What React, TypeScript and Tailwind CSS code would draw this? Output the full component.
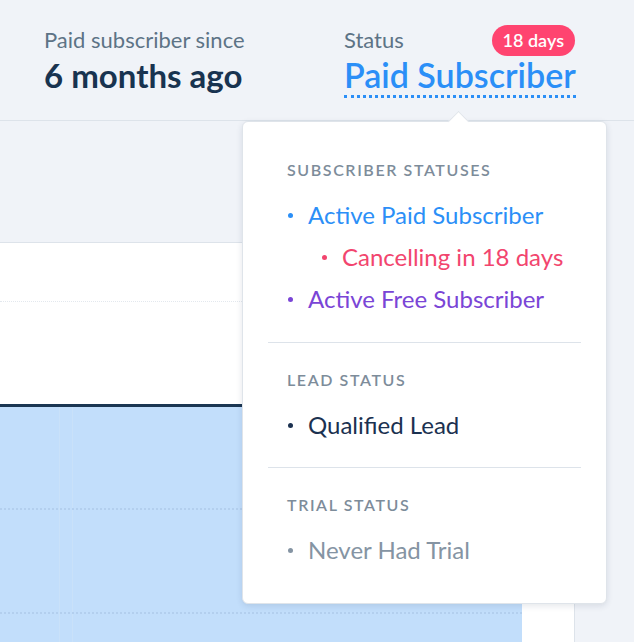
import React from "react";

const font = { fontFamily: "Lato, 'Open Sans', sans-serif" };

function Bullet({ color, indent, textClass, children }: { color: string; indent?: boolean; textClass: string; children: React.ReactNode }) {
  return (
    <div className={`flex items-center h-[42px] ${indent ? "pl-[34px]" : "pl-0"}`}>
      <span className={`w-[5px] h-[5px] rounded-full ${color}`} />
      <span className={`ml-[15px] text-[24px] whitespace-nowrap ${textClass}`}>{children}</span>
    </div>
  );
}

export default function App() {
  return (
    <div className="relative w-[634px] h-[642px] bg-[#f0f3f8] overflow-hidden" style={font}>
      {/* Header */}
      <div className="h-[121px] border-b border-[#dde3ea] flex pl-[44px] pt-[26px]">
        <div className="w-[300px]">
          <div className="text-[22px] leading-[28px] text-[#5d7386] whitespace-nowrap">Paid subscriber since</div>
          <div className="text-[33px] leading-[42px] font-bold text-[#183350] whitespace-nowrap">6 months ago</div>
        </div>
        <div className="w-[231px] relative">
          <div className="text-[22px] leading-[28px] text-[#5d7386]">Status</div>
          <div className="inline-block whitespace-nowrap text-[34px] leading-[41px] font-semibold text-[#2b8ff7] border-b-[3px] border-dotted border-[#2b8ff7]">
            Paid Subscriber
          </div>
          <span className="absolute right-0 top-[-1px] h-[31px] px-[11px] rounded-full bg-[#ff4470] text-white text-[18px] font-semibold flex items-center whitespace-nowrap">
            18 days
          </span>
        </div>
      </div>
      {/* middle band */}
      <div className="h-[121px]" />
      {/* chart panel */}
      <div className="w-[575px] h-[400px] bg-white border-t border-r border-[#dde3ea] flex flex-col">
        <div className="h-[58px]" />
        <div className="h-0 border-t border-dotted border-[#e3e8ee]" />
        <div className="h-[102px]" />
        <div className="relative w-[522px] flex-1 bg-[#c2defb] border-t-[3px] border-[#1b3652]">
          <div className="absolute left-[59px] top-0 bottom-0 w-px bg-[#c9e1f9]" />
          <div className="absolute left-[72px] top-0 bottom-0 w-px bg-[#c9e1f9]" />
          <div className="absolute left-0 right-0 top-[101px] border-t-2 border-dotted border-[#b3cfee]" />
          <div className="absolute left-0 right-0 top-[205px] border-t-2 border-dotted border-[#b3cfee]" />
        </div>
      </div>

      {/* Popover */}
      <div className="absolute left-[242px] top-[121px] w-[365px] h-[483px] bg-white rounded-[6px] border border-[#dfe4ea] shadow-[0_2px_6px_rgba(30,50,80,0.12)]">
        <div className="absolute left-[208px] top-[-8px] w-[15px] h-[15px] bg-white border-l border-t border-[#dfe4ea] rotate-45" />
        <div className="relative px-[25px]">
          <div className="pl-[20px] pt-[38px] pb-[22px]">
            <div className="-ml-[1px] text-[16px] leading-[20px] font-semibold tracking-[1.6px] text-[#7d8c9a] mb-[14px]">SUBSCRIBER STATUSES</div>
            <Bullet color="bg-[#2b8ff7]" textClass="text-[#2b8ff7]">Active Paid Subscriber</Bullet>
            <Bullet color="bg-[#f2456e]" indent textClass="text-[#f2456e]">Cancelling in 18 days</Bullet>
            <Bullet color="bg-[#7a45d6]" textClass="text-[#7a45d6]">Active Free Subscriber</Bullet>
          </div>
          <div className="border-t border-[#dde3ea]" />
          <div className="pl-[20px] pt-[27px] pb-[21px]">
            <div className="-ml-[1px] text-[16px] leading-[20px] font-semibold tracking-[1.6px] text-[#7d8c9a] mb-[14px]">LEAD STATUS</div>
            <Bullet color="bg-[#1b3150]" textClass="text-[#1b3150]">Qualified Lead</Bullet>
          </div>
          <div className="border-t border-[#dde3ea]" />
          <div className="pl-[20px] pt-[27px]">
            <div className="-ml-[1px] text-[16px] leading-[20px] font-semibold tracking-[1.6px] text-[#7d8c9a] mb-[14px]">TRIAL STATUS</div>
            <Bullet color="bg-[#8594a3]" textClass="text-[#8594a3]">Never Had Trial</Bullet>
          </div>
        </div>
      </div>
    </div>
  );
}
